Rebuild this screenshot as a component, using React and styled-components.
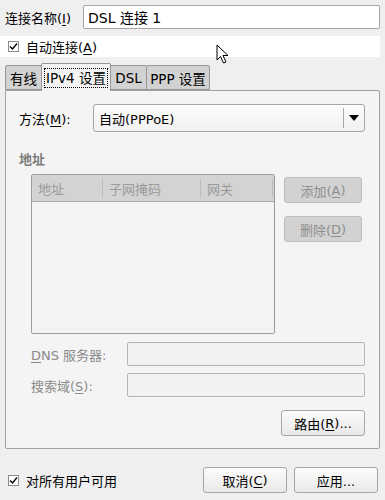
import React from 'react'
import styled, { createGlobalStyle } from 'styled-components'

const Global = createGlobalStyle`
  html, body {
    margin: 0;
    padding: 0;
    background: #efefef;
  }
  body {
    font-family: "DejaVu Sans", "Noto Sans CJK SC", sans-serif;
    font-size: 13px;
    color: #000;
  }
  u {
    text-underline-offset: 2px;
  }
`

const Window = styled.div`
  position: relative;
  width: 385px;
  height: 500px;
  padding: 5px 5px 0 5px;
  box-sizing: border-box;
  overflow: hidden;
`

const NameRow = styled.div`
  display: flex;
  align-items: center;
  height: 24px;
`

const NameLabel = styled.div`
  width: 78px;
  flex: none;
`

const TextInput = styled.div`
  flex: 1;
  height: 24px;
  box-sizing: border-box;
  border: 1px solid ${p => (p.disabled ? '#b4b4b4' : '#a4a4a4')};
  border-radius: 2px;
  background: ${p => (p.disabled ? '#f2f2f2' : '#ffffff')};
  display: flex;
  align-items: center;
  padding-left: 4px;
  font-size: 14px;
`

const CheckRow = styled.div`
  display: flex;
  align-items: center;
  gap: 7px;
  height: 21px;
  margin: ${p => (p.highlight ? '7px 0 0 -5px' : '0')};
  padding-left: 8px;
  background: ${p => (p.highlight ? '#ffffff' : 'transparent')};
`

const Box = styled.span`
  width: 11px;
  height: 11px;
  box-sizing: border-box;
  border: 1px solid #8c8c8c;
  background: #fff;
  display: flex;
  align-items: center;
  justify-content: center;
`

const TabBar = styled.div`
  display: flex;
  align-items: flex-end;
  height: 27px;
  margin-top: 6px;
  position: relative;
  z-index: 1;
`

const Tab = styled.div`
  width: ${p => p.w}px;
  height: ${p => (p.active ? 28 : 25)}px;
  box-sizing: border-box;
  border: 1px solid #979797;
  border-bottom: ${p => (p.active ? 'none' : '1px solid #979797')};
  border-radius: 2px 2px 0 0;
  background: ${p => (p.active ? '#f4f4f4' : '#d2d2d2')};
  display: flex;
  align-items: center;
  justify-content: center;
  margin-right: -1px;
  margin-bottom: ${p => (p.active ? '-1px' : '0')};
  font-size: 13.5px;
`

const Focus = styled.span`
  outline: 1px dotted #000;
  padding: 0 1px;
  line-height: 18px;
`

const Panel = styled.div`
  width: 375px;
  height: 359px;
  box-sizing: border-box;
  border: 1px solid #a0a0a0;
  border-radius: 0 2px 2px 2px;
  background: #f4f4f4;
  padding: 13px 14px 0 13px;
  display: flex;
  flex-direction: column;
`

const MethodRow = styled.div`
  display: flex;
  align-items: center;
  height: 28px;
`

const MethodLabel = styled.div`
  width: 74px;
  flex: none;
`

const Combo = styled.div`
  flex: 1;
  height: 28px;
  box-sizing: border-box;
  border: 1px solid #a4a4a4;
  border-radius: 3px;
  background: linear-gradient(#fcfcfc, #f1f1f1);
  display: flex;
  align-items: center;
  padding-left: 5px;
`

const ComboText = styled.div`
  flex: 1;
`

const ComboArrow = styled.div`
  width: 20px;
  height: 20px;
  border-left: 1px solid #a8a8a8;
  display: flex;
  align-items: center;
  justify-content: center;
`

const SectionTitle = styled.div`
  margin-top: 15px;
  color: #7c7c7c;
  font-weight: bold;
  height: 22px;
  display: flex;
  align-items: center;
`

const AddrArea = styled.div`
  display: flex;
  gap: 9px;
  margin-top: 5px;
  padding-left: 12px;
`

const Table = styled.div`
  width: 244px;
  height: 160px;
  box-sizing: border-box;
  border: 1px solid #9c9c9c;
  border-radius: 2px;
  background: #f3f3f3;
`

const Head = styled.div`
  display: flex;
  height: 26px;
  background: #d3d3d3;
  border-bottom: 1px solid #a8a8a8;
  color: #9a9a9a;
`

const HeadCell = styled.div`
  width: ${p => p.w}px;
  display: flex;
  align-items: center;
  padding-left: 6px;
  box-sizing: border-box;
  position: relative;
  &::after {
    content: '';
    position: absolute;
    right: 0;
    top: 4px;
    bottom: 4px;
    border-right: 1px solid #bcbcbc;
  }
`

const SideButtons = styled.div`
  display: flex;
  flex-direction: column;
  gap: 13px;
  padding-top: 3px;
`

const Button = styled.div`
  width: ${p => p.w}px;
  height: 26px;
  box-sizing: border-box;
  border: 1px solid ${p => (p.disabled ? '#bdbdbd' : '#a6a6a6')};
  border-radius: 3px;
  background: ${p => (p.disabled ? '#d2d2d2' : 'linear-gradient(#fbfbfb, #e9e9e9)')};
  color: ${p => (p.disabled ? '#8e8e8e' : '#000')};
  display: flex;
  align-items: center;
  justify-content: center;
`

const FieldRow = styled.div`
  display: flex;
  align-items: center;
  margin-top: ${p => p.top}px;
  padding-left: 12px;
`

const FieldLabel = styled.div`
  width: 96px;
  flex: none;
  color: #8a8a8a;
`

const RouteRow = styled.div`
  display: flex;
  justify-content: flex-end;
  margin-top: 13px;
`

const Footer = styled.div`
  display: flex;
  align-items: center;
  margin-top: 18px;
  padding-right: 2px;
`

const FooterCheck = styled.div`
  flex: 1;
  margin-left: -5px;
`

const ButtonGroup = styled.div`
  display: flex;
  gap: 7px;
`

const Cursor = styled.svg`
  position: absolute;
  left: 216px;
  top: 44px;
`

const Check = () => (
  <svg width="9" height="9" viewBox="0 0 9 9">
    <path d="M1 4.5 L3.5 7 L8 1.5" fill="none" stroke="#000" strokeWidth="1.4" />
  </svg>
)

export default function App() {
  return (
    <Window>
      <Global />
      <NameRow>
        <NameLabel>连接名称(<u>I</u>)</NameLabel>
        <TextInput>DSL 连接 1</TextInput>
      </NameRow>
      <CheckRow highlight>
        <Box><Check /></Box>
        <span>自动连接(<u>A</u>)</span>
      </CheckRow>
      <TabBar>
        <Tab w={37}>有线</Tab>
        <Tab w={70} active><Focus>IPv4 设置</Focus></Tab>
        <Tab w={37}>DSL</Tab>
        <Tab w={64}>PPP 设置</Tab>
      </TabBar>
      <Panel>
        <MethodRow>
          <MethodLabel>方法(<u>M</u>):</MethodLabel>
          <Combo>
            <ComboText>自动(PPPoE)</ComboText>
            <ComboArrow>
              <svg width="10" height="6" viewBox="0 0 10 6">
                <path d="M0 0 H10 L5 6 Z" fill="#000" />
              </svg>
            </ComboArrow>
          </Combo>
        </MethodRow>
        <SectionTitle>地址</SectionTitle>
        <AddrArea>
          <Table>
            <Head>
              <HeadCell w={71}>地址</HeadCell>
              <HeadCell w={98}>子网掩码</HeadCell>
              <HeadCell w={72}>网关</HeadCell>
            </Head>
          </Table>
          <SideButtons>
            <Button w={78} disabled>添加(<u>A</u>)</Button>
            <Button w={78} disabled>删除(<u>D</u>)</Button>
          </SideButtons>
        </AddrArea>
        <FieldRow top={8}>
          <FieldLabel><u>D</u>NS 服务器:</FieldLabel>
          <TextInput disabled />
        </FieldRow>
        <FieldRow top={7}>
          <FieldLabel>搜索域(<u>S</u>):</FieldLabel>
          <TextInput disabled />
        </FieldRow>
        <RouteRow>
          <Button w={84}>路由(<u>R</u>)...</Button>
        </RouteRow>
      </Panel>
      <Footer>
        <FooterCheck>
          <CheckRow>
            <Box><Check /></Box>
            <span>对所有用户可用</span>
          </CheckRow>
        </FooterCheck>
        <ButtonGroup>
          <Button w={84}>取消(<u>C</u>)</Button>
          <Button w={84}>应用...</Button>
        </ButtonGroup>
      </Footer>
      <Cursor width="14" height="21" viewBox="0 0 14 21">
        <path d="M1 1 L1 16 L4.5 12.5 L7.5 19 L10 18 L7 11.5 L12 11.5 Z" fill="#fff" stroke="#000" strokeWidth="1" strokeLinejoin="round" />
      </Cursor>
    </Window>
  )
}
